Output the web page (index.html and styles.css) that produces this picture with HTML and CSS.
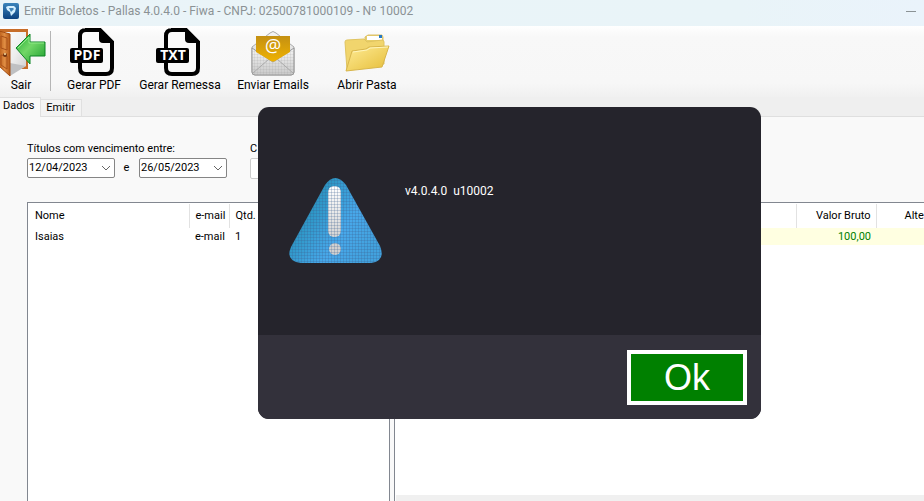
FILE: index.html
```html
<!DOCTYPE html>
<html lang="pt-BR">
<head>
<meta charset="utf-8">
<title>Emitir Boletos</title>
<link rel="stylesheet" href="styles.css">
</head>
<body>
<header class="titlebar">
  <svg class="app-icon" width="16" height="16" viewBox="0 0 16 16" aria-hidden="true">
    <defs><linearGradient id="app" x2="0" y2="1"><stop stop-color="#3b84bb"/><stop offset="1" stop-color="#0c4280"/></linearGradient></defs>
    <rect width="16" height="16" rx="2" fill="url(#app)"/>
    <path d="M3 4l2-1h6l2 2-1 4-4 4-1-4-3-2z" fill="#d3efff"/><path d="M6 5h4l1 1-3 3-1-2z" fill="#3f83b8"/>
  </svg>
  <span>Emitir Boletos - Pallas 4.0.4.0 - Fiwa - CNPJ: 02500781000109 - Nº 10002</span>
  <button class="minimize" aria-label="Minimizar"></button>
</header>

<nav class="toolbar">
  <button class="tool exit">
    <svg width="46" height="50" viewBox="0 0 46 50" aria-hidden="true">
      <defs>
        <linearGradient id="door"><stop stop-color="#bb5d17"/><stop offset=".5" stop-color="#df8c42"/><stop offset="1" stop-color="#b65a17"/></linearGradient>
        <linearGradient id="room" x2="1" y2="1"><stop stop-color="#ffffff"/><stop offset=".55" stop-color="#eeeeee"/><stop offset="1" stop-color="#cccccc"/></linearGradient>
        <linearGradient id="arrow" x2="1" y2="1"><stop stop-color="#1faa32"/><stop offset=".45" stop-color="#72d767"/><stop offset="1" stop-color="#179b2b"/></linearGradient>
      </defs>
      <path d="M0 2h28v40H9V5H0z" fill="#c76d28"/>
      <path d="M0 5h26v34L10 48z" fill="url(#room)"/>
      <path d="M10 36l16 3-16 10z" fill="#bfc0c2"/>
      <path d="M-1 4l11 3v42l-11-10z" fill="url(#door)" stroke="#a24b10"/>
      <path d="M1 9l6 2v12l-6-2zM1 28l6 1v13l-6-4z" fill="none" stroke="#a95119"/>
      <circle cx="5" cy="28" r="2" fill="#713412"/><circle cx="5" cy="27" r="1" fill="#ffe0a0"/>
      <path d="M16 21L30 7v8h15v14H30v8z" fill="url(#arrow)" stroke="#0d8525" stroke-linejoin="round"/>
      <path d="M18 21L29 10v6h15" fill="none" stroke="#91e98a"/>
    </svg>
    <span>Sair</span>
  </button>
  <span class="divider"></span>
  <button class="tool">
    <svg width="48" height="50" viewBox="0 0 48 50" aria-hidden="true">
      <path d="M15 3h15l12 12v26q0 6-6 6H16q-6 0-6-6V9q0-6 6-6z" fill="#fafafa" stroke="#000" stroke-width="4"/>
      <path d="M29 2l14 14H33q-4 0-4-4z"/><rect x="0" y="21" width="33" height="15" rx="2"/>
      <text x="17" y="33" class="file-type">PDF</text>
    </svg>
    <span>Gerar PDF</span>
  </button>
  <button class="tool">
    <svg width="48" height="50" viewBox="0 0 48 50" aria-hidden="true">
      <path d="M15 3h15l12 12v26q0 6-6 6H16q-6 0-6-6V9q0-6 6-6z" fill="#fafafa" stroke="#000" stroke-width="4"/>
      <path d="M29 2l14 14H33q-4 0-4-4z"/><rect x="0" y="21" width="33" height="15" rx="2"/>
      <text x="17" y="33" class="file-type">TXT</text>
    </svg>
    <span>Gerar Remessa</span>
  </button>
  <button class="tool">
    <svg width="44" height="50" viewBox="0 0 44 50" aria-hidden="true">
      <defs>
        <linearGradient id="gold" x2="0" y2="1"><stop stop-color="#c49013"/><stop offset="1" stop-color="#efb200"/></linearGradient>
        <linearGradient id="paper" x2="0" y2="1"><stop stop-color="#f5f5f5"/><stop offset="1" stop-color="#c9c9c9"/></linearGradient>
        <pattern id="weave" width="3" height="3" patternUnits="userSpaceOnUse"><path d="M0 0h3M0 0v3" stroke="#999" stroke-opacity=".3"/></pattern>
      </defs>
      <path d="M1 20L19 6q3-3 6 0l18 14v25q0 3-3 3H4q-3 0-3-3z" fill="url(#paper)" stroke="#a9a9a9"/>
      <path d="M1 21l21 14 21-14v24q0 3-3 3H4q-3 0-3-3z" fill="url(#paper)" stroke="#999"/>
      <path d="M1 21l21 14 21-14v24q0 3-3 3H4q-3 0-3-3z" fill="url(#weave)"/>
      <path d="M2 46l16-14h8l16 14" fill="none" stroke="#aaa"/>
      <path d="M5 9h34v16L24 34q-2 1-4 0L5 25z" fill="url(#gold)"/>
      <text x="22" y="25" class="at">@</text>
    </svg>
    <span>Enviar Emails</span>
  </button>
  <button class="tool">
    <svg width="48" height="50" viewBox="0 0 48 50" aria-hidden="true">
      <defs><linearGradient id="folder" x2="1" y2="1"><stop stop-color="#ffec96"/><stop offset="1" stop-color="#e5bd38"/></linearGradient></defs>
      <path d="M22 10l3-2h14l1 2v20H22z" fill="#e9cf68" stroke="#dcc06a"/>
      <path d="M24 9h15v4H24z" fill="#fff"/><path d="M36 8h3v3h-3z" fill="#2479c7"/>
      <path d="M2 15q0-2 2-2l17-1 3 3 15-2q2 0 2 2v22L4 43z" fill="#f1d56d" stroke="#e0c460"/>
      <path d="M9 24l14-2 3-2 20-1-7 21L3 44z" fill="url(#folder)" stroke="#d8b64c"/>
      <path d="M10 25l14-2 3-2 18-1" fill="none" stroke="#fff5bb"/>
    </svg>
    <span>Abrir Pasta</span>
  </button>
</nav>

<div class="tabs" role="tablist">
  <button class="tab active" role="tab" aria-selected="true">Dados</button>
  <button class="tab" role="tab" aria-selected="false">Emitir</button>
</div>

<main class="page">
  <form class="filters">
    <div class="field">
      <label for="from">Títulos com vencimento entre:</label>
      <div class="range">
        <div class="date"><input id="from" type="text" value="12/04/2023"><button type="button" aria-label="Abrir calendário"><svg width="10" height="6" viewBox="0 0 10 6"><path d="M1 1l4 4 4-4" fill="none" stroke="#666"/></svg></button></div>
        <label class="and" for="to">e</label>
        <div class="date"><input id="to" type="text" value="26/05/2023"><button type="button" aria-label="Abrir calendário"><svg width="10" height="6" viewBox="0 0 10 6"><path d="M1 1l4 4 4-4" fill="none" stroke="#666"/></svg></button></div>
      </div>
    </div>
    <div class="field extra">
      <label for="client">C</label>
      <input id="client" class="client" type="text">
    </div>
  </form>

  <div class="panes">
    <section class="pane">
      <table class="names">
        <colgroup><col class="c-name"><col class="c-mail"><col></colgroup>
        <thead><tr><th>Nome</th><th>e-mail</th><th>Qtd.</th></tr></thead>
        <tbody><tr><td>Isaias</td><td>e-mail</td><td>1</td></tr></tbody>
      </table>
    </section>
    <section class="pane values-pane">
      <table class="values">
        <colgroup><col class="c-lead"><col class="c-value"><col></colgroup>
        <thead><tr><th></th><th>Valor Bruto</th><th>Alte</th></tr></thead>
        <tbody><tr><td></td><td>100,00</td><td></td></tr></tbody>
      </table>
      <div class="scroll"></div>
    </section>
  </div>
</main>

<div class="dialog" role="alertdialog" aria-describedby="message">
  <div class="dialog-body">
    <svg width="94" height="88" viewBox="0 0 94 88" aria-hidden="true">
      <defs>
        <linearGradient id="warn" x2="1" y2=".6"><stop offset=".2" stop-color="#218fb5"/><stop offset=".7" stop-color="#48a8ea"/><stop offset="1" stop-color="#42a2de"/></linearGradient>
        <linearGradient id="mark" x2="0" y2="1"><stop stop-color="#fff"/><stop offset="1" stop-color="#d4d4d4"/></linearGradient>
        <pattern id="mesh" width="3" height="3" patternUnits="userSpaceOnUse"><path d="M0 .5h3M.5 0v3" stroke="#3d5f90" stroke-opacity=".25"/></pattern>
      </defs>
      <path d="M36 8Q46-6 57 8L91 69Q97 84 82 86H12Q-4 84 2 70z" fill="url(#warn)"/>
      <rect x="39" y="9" width="13" height="51" rx="6" fill="url(#mark)"/><circle cx="46" cy="72" r="6" fill="#d0d0d0"/>
      <path d="M36 8Q46-6 57 8L91 69Q97 84 82 86H12Q-4 84 2 70z" fill="url(#mesh)"/>
    </svg>
    <p id="message">v4.0.4.0&nbsp; u10002</p>
  </div>
  <div class="dialog-footer"><button class="ok">Ok</button></div>
</div>
</body>
</html>
```
FILE: styles.css
```css
* { box-sizing: border-box; }
body {
  margin: 0;
  height: 100vh;
  display: flex;
  flex-direction: column;
  position: relative;
  overflow: hidden;
  background: #f9f9f9;
  color: #000;
  font: 11px/16px Roboto, "Liberation Sans", sans-serif;
}
button, input { font: inherit; color: inherit; }
button { border: 0; padding: 0; background: none; }

.titlebar {
  flex: none;
  height: 26px;
  padding: 0 8px 4px 3px;
  display: flex;
  align-items: center;
  gap: 5px;
  background: linear-gradient(90deg, #eaf4f8, #e9f4f8 80%, #eaf3fb);
  color: #8b9295;
  font: 12px/16px Roboto, "Liberation Sans", sans-serif;
  white-space: nowrap;
}
.minimize { width: 10px; height: 1px; margin-left: auto; background: #8b9295; }

.toolbar {
  flex: none;
  display: grid;
  grid-template-columns: 42px 17px 70px 102px 84px 104px;
  height: 71px;
  background: linear-gradient(#fff, #f8f8f8 15%, #f7f7f7 80%, #f0f0f0);
}
.tool { display: flex; flex-direction: column; align-items: center; justify-content: flex-end; padding-bottom: 4px; font-size: 12px; white-space: nowrap; }
.tool svg { flex: none; overflow: visible; }
.exit svg { align-self: flex-start; }
.divider { width: 1px; height: 60px; margin: 5px 0 0 8px; background: #b5b5b5; }
.file-type { font: bold 14px "Open Sans", sans-serif; fill: #fff; text-anchor: middle; }
.at { font: 18px "Open Sans", sans-serif; fill: #fff; text-anchor: middle; }

.tabs {
  flex: none;
  height: 20px;
  display: flex;
  align-items: flex-end;
  background: #efefef;
  border-bottom: 1px solid #dfdfdf;
}
.tab { height: 17px; padding: 0 6px 0 5px; background: #f3f3f3; border: 1px solid #e0e0e0; border-width: 1px 1px 0 0; }
.active { height: 20px; margin-bottom: -1px; padding: 0 6px 3px 3px; background: #f9f9f9; }

.page { flex: 1; min-height: 0; display: flex; flex-direction: column; padding: 24px 0 0 27px; }
.filters { display: flex; gap: 23px; margin-bottom: 23px; }
.field { display: flex; flex-direction: column; gap: 1px; }
.extra { flex: 1; }
.range { display: flex; align-items: center; }
.date { display: flex; align-items: center; width: 88px; height: 20px; border: 1px solid #858585; border-radius: 2px; background: #fff; }
.date input { width: 73px; min-width: 0; padding: 0 0 0 1px; border: 0; background: none; }
.date button { display: flex; }
.and { width: 24px; padding-right: 1px; text-align: center; }
.client { width: 200px; height: 21px; border: 1px solid #ccc; border-radius: 2px; background: #fff; }

.panes { flex: 1; min-height: 0; display: grid; grid-template-columns: 363px 1fr; gap: 4px; }
.pane { display: flex; flex-direction: column; min-width: 0; overflow: hidden; border: 1px solid #828790; border-bottom: 0; background: #fff; padding-top: 1px; }
.values-pane { border-right: 0; }
table { table-layout: fixed; border-collapse: collapse; white-space: nowrap; }
.names { width: 361px; }
.values { width: 580px; text-align: right; }
.c-name { width: 161px; }
.c-mail { width: 40px; }
.c-lead { width: 401px; }
.c-value { width: 80px; }
th { height: 24px; padding: 0 6px; font-weight: 400; text-align: left; border-right: 1px solid #e2e2e2; }
td { height: 17px; padding: 0 6px; }
th:first-child, td:first-child { padding-left: 7px; }
.values th { text-align: right; padding-right: 5px; }
.values th:last-child { text-align: left; padding-left: 28px; }
.values td { background: #ffffe1; color: #008000; padding-right: 5px; }
.scroll { height: 6px; margin: auto 0 0 1px; background: #f0f0f0; }

.dialog {
  position: absolute;
  top: 107px;
  left: 258px;
  width: 503px;
  border-radius: 11px;
  overflow: hidden;
  background: #25242c;
  color: #fff;
  font-size: 12px;
}
.dialog-body { display: flex; gap: 22px; height: 228px; padding: 70px 31px; }
.dialog-body p { margin: 6px 0; }
.dialog-footer { display: flex; justify-content: flex-end; padding: 15px 14px 14px; background: #33313b; }
.ok {
  width: 120px;
  height: 55px;
  border: 4px solid #fff;
  background: #008000;
  color: #fff;
  font: 36px/44px "Liberation Sans", sans-serif;
}
```
